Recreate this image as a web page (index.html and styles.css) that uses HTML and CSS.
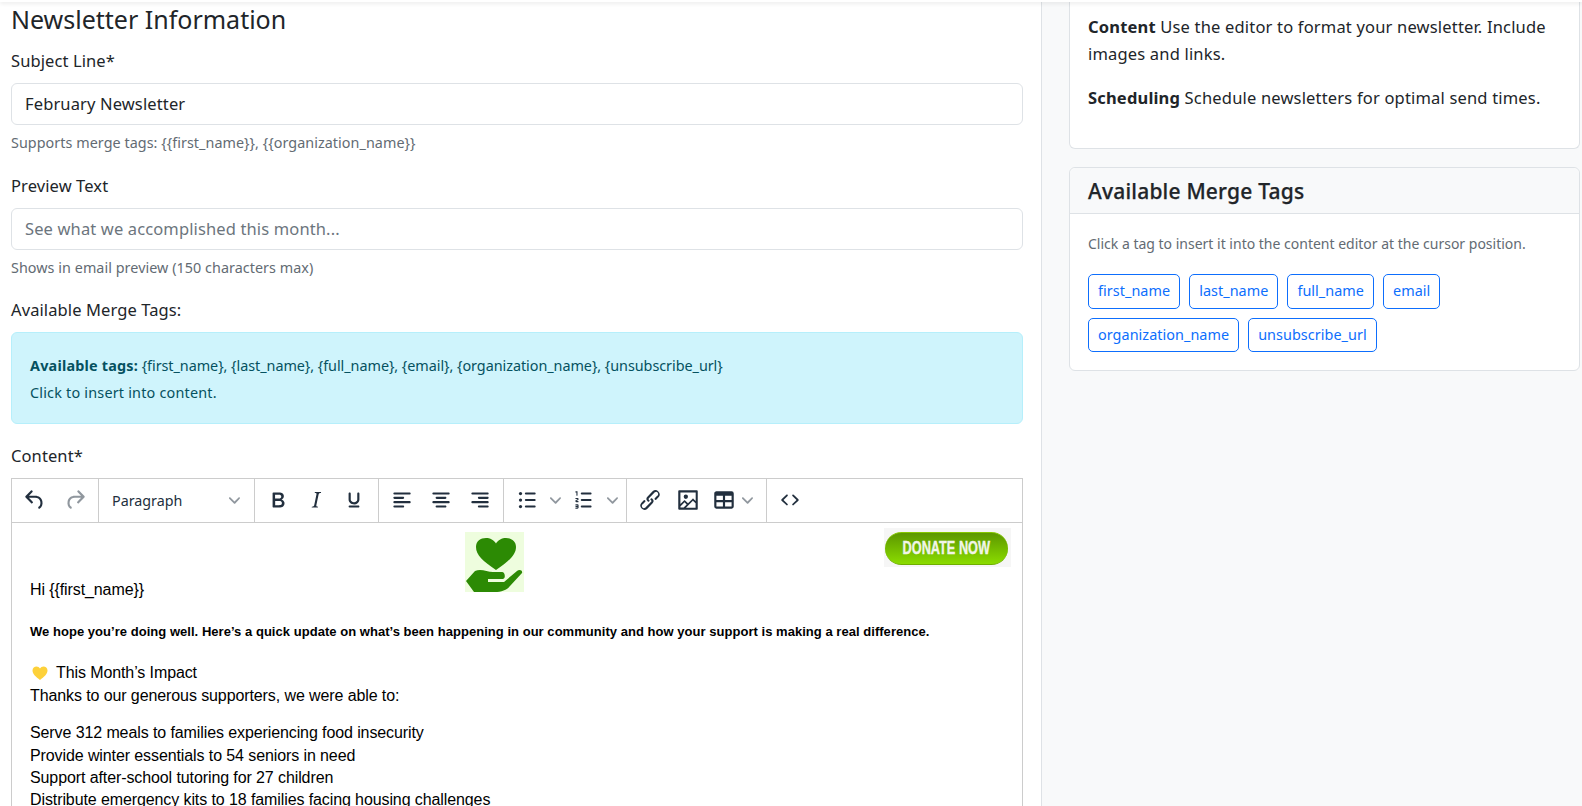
FILE: index.html
```html
<!DOCTYPE html>
<html lang="en">
<head>
<meta charset="utf-8">
<title>Newsletter Information</title>
<link rel="stylesheet" href="styles.css">
</head>
<body>
<div class="topbar"></div>
<div class="page">
  <main class="main">
    <h2 class="title">Newsletter Information</h2>
    <div class="field field-subject">
      <label class="label">Subject Line*</label>
      <div class="input">February Newsletter</div>
      <div class="help">Supports merge tags: {{first_name}}, {{organization_name}}</div>
    </div>
    <div class="field field-preview">
      <label class="label">Preview Text</label>
      <div class="input input-placeholder">See what we accomplished this month...</div>
      <div class="help">Shows in email preview (150 characters max)</div>
    </div>
    <div class="field">
      <label class="label label-high">Available Merge Tags:</label>
      <div class="alert">
        <div class="alert-tags"><strong>Available tags:</strong> {first_name}, {last_name}, {full_name}, {email}, {organization_name}, {unsubscribe_url}</div>
        <div class="alert-note">Click to insert into content.</div>
      </div>
    </div>
    <div class="field">
      <label class="label label-high label-editor">Content*</label>
      <div class="editor">
        <div class="toolbar">
          <div class="group group-history">
            <span class="tb"><svg class="ic" viewBox="0 0 24 24"><path d="M6.4 8H12c3.7 0 6.2 2 6.8 5.1.6 2.7-.4 5.6-2.3 6.8a1 1 0 0 1-1-1.8c1.1-.6 1.8-2.7 1.4-4.6-.5-2.1-2.1-3.5-4.9-3.5H6.4l3.3 3.3a1 1 0 1 1-1.4 1.4l-5-5a1 1 0 0 1 0-1.4l5-5a1 1 0 0 1 1.4 1.4L6.4 8Z"/></svg></span>
            <span class="tb off"><svg class="ic" viewBox="0 0 24 24"><path transform="matrix(-1 0 0 1 24 0)" d="M6.4 8H12c3.7 0 6.2 2 6.8 5.1.6 2.7-.4 5.6-2.3 6.8a1 1 0 0 1-1-1.8c1.1-.6 1.8-2.7 1.4-4.6-.5-2.1-2.1-3.5-4.9-3.5H6.4l3.3 3.3a1 1 0 1 1-1.4 1.4l-5-5a1 1 0 0 1 0-1.4l5-5a1 1 0 0 1 1.4 1.4L6.4 8Z"/></svg></span>
          </div>
          <div class="group group-select">
            <span class="select-text">Paragraph</span>
            <svg class="chev" viewBox="0 0 10 10"><path d="M8.7 2.2c.3-.3.8-.3 1 0 .4.4.4.9 0 1.2L5.7 7.8c-.3.3-.9.3-1.2 0L.2 3.4a.8.8 0 0 1 0-1.2c.3-.3.8-.3 1.1 0L5 6l3.7-3.8Z"/></svg>
          </div>
          <div class="group group-format">
            <span class="tb"><svg class="ic" viewBox="0 0 24 24"><path d="M7.8 19c-.3 0-.5 0-.6-.2l-.2-.5V5.7c0-.2 0-.4.2-.5l.6-.2h5c1.5 0 2.7.3 3.5 1 .7.6 1.1 1.4 1.1 2.5a3 3 0 0 1-.6 1.9c-.4.6-1 1-1.6 1.2.4.1.9.3 1.3.6s.8.7 1 1.2c.4.4.5 1 .5 1.6 0 1.3-.4 2.3-1.3 3-.8.7-2.1 1-3.8 1H7.8Zm5-8.3c.6 0 1.2-.1 1.6-.5.4-.3.6-.7.6-1.3 0-1.1-.8-1.7-2.3-1.7H9.3v3.5h3.4Zm.5 6c.7 0 1.3-.1 1.7-.4.4-.4.6-.9.6-1.5s-.2-1-.7-1.4c-.4-.3-1-.4-2-.4H9.4v3.8h4Z"/></svg></span>
            <span class="tb"><svg class="ic" viewBox="0 0 24 24"><path d="m16.7 4.7-.1.9h-.3c-.6 0-1 0-1.4.3-.3.3-.4.6-.5 1.1l-2.1 9.8v.6c0 .5.4.8 1.4.8h.2l-.2.8H8l.2-.8h.2c1.1 0 1.8-.5 2-1.5l2-9.8.1-.5c0-.6-.4-.8-1.4-.8h-.3l.2-.9h5.8Z"/></svg></span>
            <span class="tb"><svg class="ic" viewBox="0 0 24 24"><path d="M16 5c.6 0 1 .4 1 1v5.500a4 4 0 0 1-.4 1.800l-1 1.400a5.300 5.300 0 0 1-5.500 1 5 5 0 0 1-1.600-1c-.5-.4-.8-.9-1.100-1.400a4 4 0 0 1-.4-1.800V6c0-.6.4-1 1-1s1 .4 1 1v5.500c0 .3 0 .6.2 1l.6.7a3.300 3.300 0 0 0 2.200.8 3.400 3.400 0 0 0 2.200-.8c.3-.2.4-.5.6-.8l.2-.9V6c0-.6.4-1 1-1ZM8 17h8c.6 0 1 .4 1 1s-.4 1-1 1H8a1 1 0 0 1 0-2Z"/></svg></span>
          </div>
          <div class="group">
            <span class="tb"><svg class="ic" viewBox="0 0 24 24"><path d="M5 5h14c.6 0 1 .4 1 1s-.4 1-1 1H5a1 1 0 1 1 0-2Zm0 4h8c.6 0 1 .4 1 1s-.4 1-1 1H5a1 1 0 1 1 0-2Zm0 8h8c.6 0 1 .4 1 1s-.4 1-1 1H5a1 1 0 0 1 0-2Zm0-4h14c.6 0 1 .4 1 1s-.4 1-1 1H5a1 1 0 0 1 0-2Z"/></svg></span>
            <span class="tb"><svg class="ic" viewBox="0 0 24 24"><path d="M5 5h14c.6 0 1 .4 1 1s-.4 1-1 1H5a1 1 0 1 1 0-2Zm3 4h8c.6 0 1 .4 1 1s-.4 1-1 1H8a1 1 0 1 1 0-2Zm0 8h8c.6 0 1 .4 1 1s-.4 1-1 1H8a1 1 0 0 1 0-2Zm-3-4h14c.6 0 1 .4 1 1s-.4 1-1 1H5a1 1 0 0 1 0-2Z"/></svg></span>
            <span class="tb"><svg class="ic" viewBox="0 0 24 24"><path d="M5 5h14c.6 0 1 .4 1 1s-.4 1-1 1H5a1 1 0 1 1 0-2Zm6 4h8c.6 0 1 .4 1 1s-.4 1-1 1h-8a1 1 0 0 1 0-2Zm0 8h8c.6 0 1 .4 1 1s-.4 1-1 1h-8a1 1 0 0 1 0-2Zm-6-4h14c.6 0 1 .4 1 1s-.4 1-1 1H5a1 1 0 0 1 0-2Z"/></svg></span>
          </div>
          <div class="group group-tight">
            <span class="tb"><svg class="ic" viewBox="0 0 24 24"><path d="M11 5h8c.6 0 1 .4 1 1s-.4 1-1 1h-8a1 1 0 0 1 0-2Zm0 6h8c.6 0 1 .4 1 1s-.4 1-1 1h-8a1 1 0 0 1 0-2Zm0 6h8c.6 0 1 .4 1 1s-.4 1-1 1h-8a1 1 0 0 1 0-2Z"/><circle cx="6" cy="6" r="1.5"/><circle cx="6" cy="12" r="1.5"/><circle cx="6" cy="18" r="1.5"/></svg></span>
            <span class="tb-chev"><svg class="chev" viewBox="0 0 10 10"><path d="M8.7 2.2c.3-.3.8-.3 1 0 .4.4.4.9 0 1.2L5.7 7.8c-.3.3-.9.3-1.2 0L.2 3.4a.8.8 0 0 1 0-1.2c.3-.3.8-.3 1.1 0L5 6l3.7-3.8Z"/></svg></span>
            <span class="tb"><svg class="ic" viewBox="0 0 24 24"><path d="M10 17h8c.6 0 1 .4 1 1s-.4 1-1 1h-8a1 1 0 0 1 0-2Zm0-6h8c.6 0 1 .4 1 1s-.4 1-1 1h-8a1 1 0 0 1 0-2Zm0-6h8c.6 0 1 .4 1 1s-.4 1-1 1h-8a1 1 0 1 1 0-2ZM6 4v3.500c0 .3-.2.5-.5.5a.5.5 0 0 1-.5-.5V5h-.5a.5.5 0 0 1 0-1H6Zm-1 8.800.2.2h1.300c.3 0 .5.2.5.5s-.2.5-.5.5H4.900a1 1 0 0 1-.9-1V13c0-.4.3-.8.6-1l1.200-.4.2-.3a.2.2 0 0 0-.2-.2H4.500a.5.5 0 0 1-.5-.5c0-.3.2-.5.5-.5h1.600c.5 0 .9.4.9 1v.1c0 .4-.3.8-.6 1l-1.200.4-.2.3ZM7 17v2c0 .6-.4 1-1 1H4.500a.5.5 0 0 1 0-1h1.200c.2 0 .3-.1.3-.3 0-.2-.1-.3-.3-.3H4.400a.4.4 0 1 1 0-.8h1.300c.2 0 .3-.1.3-.3 0-.2-.1-.3-.3-.3H4.500a.5.5 0 1 1 0-1H6c.6 0 1 .4 1 1Z"/></svg></span>
            <span class="tb-chev"><svg class="chev" viewBox="0 0 10 10"><path d="M8.7 2.2c.3-.3.8-.3 1 0 .4.4.4.9 0 1.2L5.7 7.8c-.3.3-.9.3-1.2 0L.2 3.4a.8.8 0 0 1 0-1.2c.3-.3.8-.3 1.1 0L5 6l3.7-3.8Z"/></svg></span>
          </div>
          <div class="group group-tight">
            <span class="tb"><svg class="ic" viewBox="0 0 24 24"><path d="M6.2 12.300a1 1 0 0 1 1.400 1.400l-2 2a2 2 0 1 0 2.600 2.800l4.800-4.800a1 1 0 0 0 0-1.400 1 1 0 1 1 1.400-1.300 2.900 2.900 0 0 1 0 4L9.600 20a3.900 3.900 0 0 1-5.500-5.500l2-2Zm11.600-.6a1 1 0 0 1-1.400-1.400l2-2a2 2 0 1 0-2.600-2.800L11 10.300a1 1 0 0 0 0 1.400A1 1 0 1 1 9.600 13a2.900 2.900 0 0 1 0-4L14.400 4a3.900 3.900 0 0 1 5.500 5.500l-2 2Z"/></svg></span>
            <span class="tb"><svg class="ic" viewBox="0 0 24 24"><path fill-rule="evenodd" d="m5 15.700 3.300-3.200c.3-.3.7-.3 1 0L12 15l4.100-4c.3-.4.8-.4 1 0l2 1.900V5H5v10.700ZM5 18V19h3l2.800-2.900-2-2L5 17.900Zm14-3-2.500-2.400-6.400 6.500H19v-4ZM4 3h16c.6 0 1 .4 1 1v16c0 .6-.4 1-1 1H4a1 1 0 0 1-1-1V4c0-.6.4-1 1-1Zm6 8a2 2 0 1 0 0-4 2 2 0 0 0 0 4Z"/></svg></span>
            <span class="tb tb-table"><svg class="ic" viewBox="0 0 24 24"><path fill-rule="evenodd" d="M19 4a2 2 0 0 1 2 2v12a2 2 0 0 1-2 2H5a2 2 0 0 1-2-2V6c0-1.100.9-2 2-2h14Zm0 10h-6v4h6v-4Zm-8 0H5v4h6v-4Zm8-6h-6v4h6V8Zm-8 0H5v4h6V8Z"/></svg></span>
            <span class="tb-chev tb-chev-table"><svg class="chev" viewBox="0 0 10 10"><path d="M8.700 2.200c.3-.3.8-.3 1 0 .4.4.4.9 0 1.200L5.700 7.800c-.3.3-.9.3-1.200 0L.2 3.400a.8.8 0 0 1 0-1.200c.3-.3.8-.3 1.100 0L5 6l3.700-3.800Z"/></svg></span>
          </div>
          <div class="group group-last">
            <span class="tb"><svg class="ic" viewBox="0 0 24 24"><path d="M9.800 15.700c.3.3.3.8 0 1-.3.4-.9.4-1.200 0l-4.400-4.100a.8.8 0 0 1 0-1.200l4.400-4.200c.3-.3.9-.3 1.200 0 .3.3.3.8 0 1.100L6 12l3.800 3.700ZM14.200 15.700c-.3.3-.3.8 0 1 .4.4.9.4 1.200 0l4.400-4.100c.3-.3.3-.9 0-1.200l-4.400-4.200a.8.8 0 0 0-1.200 0c-.3.3-.3.8 0 1.100L18 12l-3.800 3.700Z"/></svg></span>
          </div>
        </div>
        <div class="body">
          <div class="hero">
            <p class="hi">Hi {{first_name}}</p>
            <svg class="logo" viewBox="0 0 59 60"><rect width="59" height="60" fill="#eefdde"/><path fill="#2c8a04" d="M31 38C18 29 11 23 11 15 11 9 15.500 6 21 6c4 0 8 2 10 5.500C33 8 37 6 41 6c5.500 0 10 3 10 9 0 8-7 14-20 23Z"/><path fill="#2c8a04" d="M1 49 10 39c6-3 12 1 18 1h9c3 0 4 6 1 7H23v3h16l13-11c2-2 6-1 5 2L45 54c-3 4-9 6-15 6H9Z"/><rect x="23" y="47" width="17" height="2.200" rx="1.100" fill="#eefdde"/></svg>
            <div class="donate"><span class="donate-pill"><span class="donate-text">DONATE NOW</span></span></div>
          </div>
          <p class="lead">We hope you’re doing well. Here’s a quick update on what’s been happening in our community and how your support is making a real difference.</p>
          <p class="impact"><svg class="heart" viewBox="0 0 16 16"><path fill="#fdd13a" d="M8 15C4 12 .5 9 .5 5.500.5 3 2.500 1.500 4.500 1.500c1.500 0 2.700.8 3.500 2 .8-1.200 2-2 3.500-2 2 0 4 1.500 4 4C15.500 9 12 12 8 15Z"/></svg>This Month’s Impact<br>Thanks to our generous supporters, we were able to:</p>
          <p class="list">Serve 312 meals to families experiencing food insecurity<br>Provide winter essentials to 54 seniors in need<br>Support after-school tutoring for 27 children<br>Distribute emergency kits to 18 families facing housing challenges</p>
        </div>
      </div>
    </div>
  </main>
  <aside class="side">
    <section class="card card-top">
      <p class="tip"><strong>Content</strong> Use the editor to format your newsletter. Include images and links.</p>
      <p class="tip"><strong>Scheduling</strong> Schedule newsletters for optimal send times.</p>
    </section>
    <section class="card">
      <h3 class="card-head">Available Merge Tags</h3>
      <div class="card-body">
        <p class="tag-note">Click a tag to insert it into the content editor at the cursor position.</p>
        <div class="tags">
          <span class="tag">first_name</span>
          <span class="tag">last_name</span>
          <span class="tag">full_name</span>
          <span class="tag">email</span>
          <span class="tag">organization_name</span>
          <span class="tag">unsubscribe_url</span>
        </div>
      </div>
    </section>
  </aside>
</div>
</body>
</html>
```
FILE: styles.css
```css
* { box-sizing: border-box; }
html, body { margin: 0; height: 100%; overflow: hidden; }
body { font-family: "Noto Sans", "Open Sans", sans-serif; font-size: 16.5px; color: #212529; background: #fff; letter-spacing: 0.1px; }
.topbar { position: absolute; top: 0; left: 0; right: 0; height: 2px; background: #fff; box-shadow: 0 1px 4px rgba(0,0,0,.15); z-index: 5; }
.page { display: flex; height: 806px; }
.main { width: 1042px; flex: none; padding: 5px 18px 0 11px; border-right: 1px solid #dee2e6; }
.title { font-size: 25px; font-weight: 400; line-height: 29px; margin: 0 0 14px; letter-spacing: 0; }
.field { margin-bottom: 20.25px; }
.field-subject { margin-bottom: 20.5px; }
.field-preview { margin-bottom: 20px; }
.label { display: block; line-height: 25px; margin-bottom: 9.5px; }
.label-high { line-height: 24px; margin-bottom: 10.5px; }
.label-editor { margin-bottom: 9.5px; }
.input { height: 42.5px; border: 1px solid #dee2e6; border-radius: 6px; padding: 0 13px; line-height: 40.5px; letter-spacing: .13px; }
.input-placeholder { color: #6c757d; }
.help { font-size: 14.35px; color: #636b73; line-height: 21px; margin-top: 6.5px; letter-spacing: .05px; }
.alert { height: 92px; padding: 19px 18px; background: #cff4fc; border: 1px solid #b6effb; border-radius: 6px; color: #055160; font-size: 14.4px; line-height: 27px; }
.alert-tags { letter-spacing: -0.05px; }
.alert-tags strong { letter-spacing: .2px; }
.alert-note { letter-spacing: .2px; }
.editor { border: 1px solid #ccc; height: 400px; }
.toolbar { display: flex; height: 44px; border-bottom: 1px solid #ccc; }
.group { display: flex; align-items: center; gap: 1px; padding: 0 4px; border-right: 1px solid #ccc; }
.group-history { gap: 2px; }
.group-tight { gap: 0; }
.group-format { gap: 0; padding-right: 5px; }
.group-last { border-right: none; }
.group-select { width: 156px; padding: 0 14px 0 13px; justify-content: space-between; font-size: 14.3px; letter-spacing: 0; color: #222f3e; }
.tb { width: 38px; height: 34px; display: flex; align-items: center; justify-content: center; }
.tb-table { width: 34px; }
.tb-chev { width: 19px; height: 34px; display: flex; align-items: center; justify-content: center; }
.tb-chev-table { width: 12px; margin-right: 9px; }
.ic { width: 26px; height: 26px; fill: #222f3e; flex: none; }
.off .ic { fill: rgba(34,47,62,.5); }
.chev { width: 11px; height: 11px; fill: rgba(34,47,62,.5); flex: none; }
.body { font-family: "Liberation Sans", Arial, sans-serif; color: #000; letter-spacing: -0.1px; padding: 5px 11px 0 18px; font-size: 16px; line-height: 22.4px; }
.body p { margin: 0; }
.hero { display: grid; grid-template-columns: 435px 59px 1fr; height: 74px; }
.hi { align-self: end; }
.logo { width: 59px; height: 60px; margin-top: 4px; }
.donate { justify-self: end; width: 127px; height: 39px; background: #f6f6f6; padding: 4px 3px 2px 1px; }
.donate-pill { display: flex; align-items: center; justify-content: center; height: 33px; border-radius: 17px; background: linear-gradient(#5c9700, #8bdc00); border-top: 1px solid #86c800; border-bottom: 1px solid #6fae00; color: #f1f5e8; white-space: nowrap; }
.donate-text { display: block; flex: none; font-family: "Liberation Sans", sans-serif; font-weight: 700; font-size: 19px; letter-spacing: 0; transform: scaleX(.67); -webkit-text-stroke: .4px #f1f5e8; }
.lead { font-size: 13px; font-weight: 700; line-height: 18px; margin-top: 21px !important; letter-spacing: .035px; }
.impact { margin-top: 20.5px !important; line-height: 23px; }
.heart { width: 16px; height: 16px; margin: 0 8px 0 2px; vertical-align: -3px; }
.list { margin-top: 15px !important; }
.side { flex: 1; background: #f8f9fa; padding: 0 2px 0 27px; display: flex; flex-direction: column; gap: 18px; }
.card { background: #fff; border: 1px solid #dee2e6; border-radius: 6px; }
.card-top { border-top: none; border-radius: 0 0 6px 6px; height: 149px; padding: 14.25px 18px 0; }
.tip { margin: 0 0 17.5px; line-height: 26.5px; letter-spacing: .18px; }
.card-head { margin: 0; height: 46px; background: #f8f9fa; border-bottom: 1px solid #dee2e6; border-radius: 6px 6px 0 0; font-size: 21px; font-weight: 500; line-height: 46px; padding: 0 18px; letter-spacing: .2px; -webkit-text-stroke: .25px #212529; }
.card-body { padding: 19px 18px 18px; }
.tag-note { margin: 0 0 20px; font-size: 14px; color: #636b73; line-height: 21px; letter-spacing: 0; }
.tags { display: flex; flex-wrap: wrap; gap: 9px; }
.tag { height: 34.5px; line-height: 32.5px; padding: 0 9px; border: 1px solid #0d6efd; border-radius: 5px; color: #0d6efd; font-size: 14.4px; background: #fff; letter-spacing: .05px; }
```
